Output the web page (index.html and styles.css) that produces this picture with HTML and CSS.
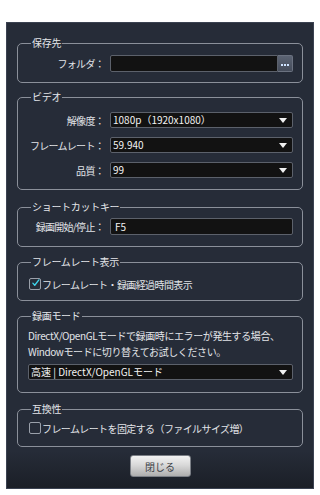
FILE: index.html
```html
<!DOCTYPE html>
<html lang="ja">
<head>
<meta charset="utf-8">
<link rel="stylesheet" href="styles.css">
</head>
<body>
<div class="panel">
  <fieldset class="group g1">
    <legend>保存先</legend>
    <div class="row">
      <span class="label">フォルダ：</span>
      <div class="field with-btn">
        <div class="input"></div>
        <div class="browse"><span></span><span></span><span></span></div>
      </div>
    </div>
  </fieldset>

  <fieldset class="group g2">
    <legend>ビデオ</legend>
    <div class="rows">
      <div class="row">
        <span class="label">解像度：</span>
        <div class="select">1080p（1920x1080）<i class="arrow"></i></div>
      </div>
      <div class="row">
        <span class="label">フレームレート：</span>
        <div class="select">59.940<i class="arrow"></i></div>
      </div>
      <div class="row">
        <span class="label">品質：</span>
        <div class="select">99<i class="arrow"></i></div>
      </div>
    </div>
  </fieldset>

  <fieldset class="group g3">
    <legend>ショートカットキー</legend>
    <div class="row">
      <span class="label">録画開始/停止：</span>
      <div class="input text">F5</div>
    </div>
  </fieldset>

  <fieldset class="group g4">
    <legend>フレームレート表示</legend>
    <label class="check">
      <span class="box"><svg width="12" height="12" viewBox="0 0 12 12"><path d="M2.5 6.2 L5 9 L10.5 1.8" fill="none" stroke="#3fd3ea" stroke-width="1.8" stroke-linecap="round" stroke-linejoin="round"/></svg></span>
      フレームレート・録画経過時間表示
    </label>
  </fieldset>

  <fieldset class="group g5">
    <legend>録画モード</legend>
    <p class="note">DirectX/OpenGLモードで録画時にエラーが発生する場合、<br>Windowモードに切り替えてお試しください。</p>
    <div class="select wide">高速 | DirectX/OpenGLモード<i class="arrow"></i></div>
  </fieldset>

  <fieldset class="group g6">
    <legend>互換性</legend>
    <label class="check">
      <span class="box"></span>
      フレームレートを固定する（ファイルサイズ増）
    </label>
  </fieldset>

  <div class="actions">
    <button class="close">閉じる</button>
  </div>
</div>
</body>
</html>
```

FILE: styles.css
```css
html, body {
  margin: 0;
  padding: 0;
  background: #ffffff;
}

body {
  font-family: "Noto Sans CJK JP", "Noto Sans", sans-serif;
  font-size: 10px;
  color: #e2e4e8;
}

.panel {
  margin: 22px 6px 0 6px;
  height: 467px;
  box-sizing: border-box;
  border: 1px solid #3b4251;
  background: linear-gradient(to bottom, #262c38 0%, #262c38 92%, #1b1f27 100%);
  padding: 14px 10px 0 10px;
  display: flex;
  flex-direction: column;
}

.group {
  margin: 0;
  border: 1px solid #8b909a;
  border-radius: 5px;
  padding: 0 9px 0 10px;
  min-width: 0;
}

.group legend {
  margin-left: 3px;
  padding: 0 1px;
  line-height: 12px;
  font-size: 10px;
  color: #e4e6ea;
  letter-spacing: -0.3px;
}

.g1 { padding-top: 6px; padding-bottom: 10px; }
.g2 { margin-top: 8px; padding-top: 9px; padding-bottom: 11px; }
.g3 { margin-top: 11px; padding-top: 5px; padding-bottom: 11px; }
.g4 { margin-top: 9px; padding-top: 9px; padding-bottom: 9px; }
.g5 { margin-top: 9px; padding-top: 6px; padding-bottom: 12px; }
.g6 { margin-top: 10px; padding-top: 6px; padding-bottom: 11px; }

.rows {
  display: flex;
  flex-direction: column;
  gap: 9px;
}

.row {
  display: grid;
  grid-template-columns: 76px 1fr;
  column-gap: 6px;
  align-items: center;
}

.label {
  text-align: right;
  white-space: nowrap;
  color: #e2e4e8;
  letter-spacing: -0.7px;
}

.field.with-btn {
  display: flex;
  height: 17px;
}

.input {
  box-sizing: border-box;
  height: 17px;
  flex: 1;
  background: #121212;
  border: 1px solid #5c616b;
  border-radius: 2px;
  padding: 0 4px;
  line-height: 15px;
  color: #f2f2f2;
}

.with-btn .input {
  border-radius: 2px 0 0 2px;
}

.browse {
  box-sizing: border-box;
  width: 15px;
  height: 17px;
  background: linear-gradient(to bottom, #5b6373, #454c5a);
  border: 1px solid #6b7280;
  border-left: none;
  border-radius: 0 2px 2px 0;
  display: flex;
  align-items: center;
  justify-content: center;
  gap: 1px;
  padding-top: 3px;
}

.browse span {
  width: 2px;
  height: 2px;
  background: #cfe3ff;
}

.select {
  box-sizing: border-box;
  height: 16px;
  background: #121212;
  border: 1px solid #5c616b;
  border-radius: 2px;
  padding: 0 3px 0 2px;
  line-height: 14px;
  color: #f2f2f2;
  display: flex;
  align-items: center;
  justify-content: space-between;
  white-space: nowrap;
}

.select.wide {
  margin-top: 4px;
}

.arrow {
  display: block;
  width: 0;
  height: 0;
  border-left: 4px solid transparent;
  border-right: 4px solid transparent;
  border-top: 5px solid #f0f0f0;
  margin-right: 2px;
  margin-top: 1px;
}

.note {
  margin: 0;
  line-height: 16px;
  color: #e2e4e8;
  white-space: nowrap;
  letter-spacing: -0.4px;
}

.check {
  display: flex;
  align-items: center;
  height: 14px;
  margin-left: 1px;
  gap: 1px;
  color: #e2e4e8;
  white-space: nowrap;
  letter-spacing: -0.6px;
}

.box {
  box-sizing: border-box;
  width: 12px;
  height: 12px;
  border: 1px solid #9aa0aa;
  border-radius: 2px;
  display: flex;
  align-items: center;
  justify-content: center;
  flex: none;
}

.box svg {
  display: block;
  margin-top: -2px;
  margin-left: 1px;
}

.actions {
  display: flex;
  justify-content: center;
  margin-top: 8px;
}

.close {
  width: 61px;
  height: 22px;
  margin: 0;
  padding: 0;
  border: 1px solid #7b7f86;
  border-radius: 3px;
  background: linear-gradient(to bottom, #f2f2f2 0%, #d9d9d9 45%, #aeaeae 100%);
  font-family: "Noto Sans CJK JP", "Noto Sans", sans-serif;
  font-size: 10px;
  color: #3a3d44;
}
```
